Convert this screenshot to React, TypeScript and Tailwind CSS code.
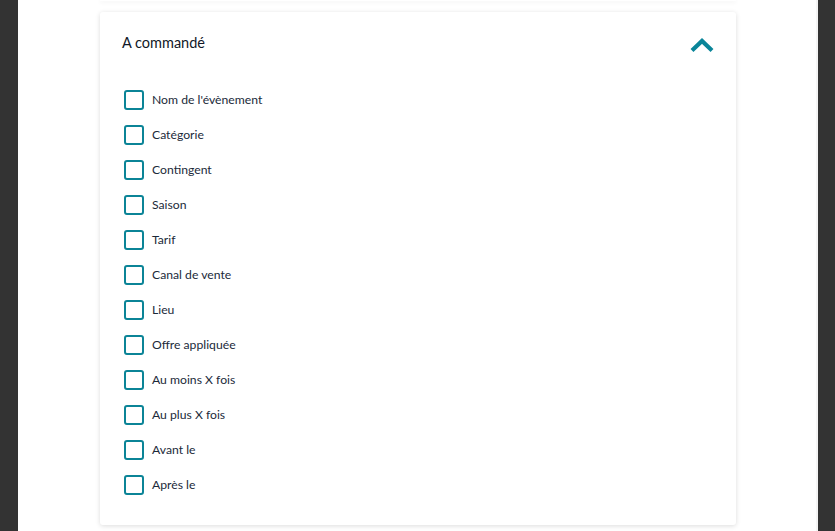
const options = [
  "Nom de l'évènement",
  "Catégorie",
  "Contingent",
  "Saison",
  "Tarif",
  "Canal de vente",
  "Lieu",
  "Offre appliquée",
  "Au moins X fois",
  "Au plus X fois",
  "Avant le",
  "Après le",
]

function ChevronUp() {
  return (
    <svg width="24" height="15" viewBox="0 0 24 15" className="mt-[5px]">
      <path d="M2 12.5 L12 3 L22 12.5" fill="none" stroke="#0a8599" strokeWidth="4.2" />
    </svg>
  )
}

function CheckRow({ label }: { label: string }) {
  return (
    <label className="flex h-5 items-center">
      <span className="h-5 w-5 rounded-[3px] border-2 border-[#0b8497] bg-white" />
      <span className="ml-[8px] text-[12.2px] text-[#1b2a3a]">{label}</span>
    </label>
  )
}

export default function App() {
  return (
    <div className="flex h-[531px] w-full overflow-hidden bg-[#333333] font-['Lato',sans-serif]">
      <div className="w-[18px] shrink-0" />
      <main className="flex-1 bg-white pl-[82px] pr-[80px]">
        {/* bottom edge of the card above */}
        <div className="h-px w-[636px] bg-white shadow-[0_1px_4px_rgba(0,0,0,0.12)]" />

        <section className="mt-[11px] w-[636px] rounded-[3px] bg-white px-[22px] pt-[21px] pb-[30px] shadow-[0_1px_5px_rgba(0,0,0,0.14)]">
          <div className="flex items-start justify-between">
            <h3 className="h-5 text-[14.5px] leading-5 text-[#111827]">A commandé</h3>
            <ChevronUp />
          </div>

          <div className="mt-[37px] flex flex-col gap-[15px] pl-[2px]">
            {options.map((o) => (
              <CheckRow key={o} label={o} />
            ))}
          </div>
        </section>
      </main>
      <div className="w-[2px] shrink-0 bg-[#f4f4f4]" />
      <div className="w-[17px] shrink-0" />
    </div>
  )
}
